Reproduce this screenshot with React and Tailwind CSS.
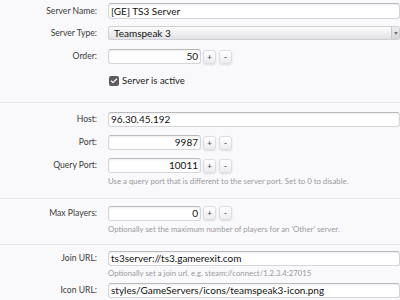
import { Check } from 'lucide-react'

const font = { fontFamily: 'Lato, "Liberation Sans", sans-serif' }

function Label({ children }) {
  return (
    <div className="w-[98px] shrink-0 pr-[1px] text-right text-[8.6px] text-[#3a3a3a]">{children}</div>
  )
}

function TextInput({ value, className = '' }) {
  return (
    <div
      className={`flex h-[15px] items-center whitespace-nowrap rounded-[3px] border border-[#d5d5da] border-t-[#b9b9be] bg-white px-[2px] text-[10px] text-[#111] shadow-[inset_0_1px_2px_rgba(0,0,0,0.08)] ${className}`}
    >
      {value}
    </div>
  )
}

function Spin() {
  return (
    <div className="ml-[2px] flex gap-[3px]">
      {['+', '-'].map((s) => (
        <div
          key={s}
          className="flex h-[14px] w-[13px] items-center justify-center rounded-[3px] border border-[#dcdce2] bg-gradient-to-b from-white to-[#ececf1] text-[8px] font-bold text-[#555] shadow-[0_1px_2px_rgba(0,0,0,0.12)]"
        >
          {s}
        </div>
      ))}
    </div>
  )
}

function Row({ label, children, className = '' }) {
  return (
    <div className={`flex items-center gap-[10px] ${className}`}>
      <Label>{label}</Label>
      {children}
    </div>
  )
}

function Hint({ children, className = '' }) {
  return <div className={`pl-[108px] text-[7.8px] text-[#9a9aa0] whitespace-nowrap ${className}`}>{children}</div>
}

export default function App() {
  return (
    <div className="h-[300px] w-[400px] overflow-hidden bg-[#f9f9fb]" style={font}>
      {/* General */}
      <div className="flex flex-col pt-[3px] pb-[14px]">
        <Row label="Server Name:">
          <TextInput value="[GE] TS3 Server" className="h-[16px] w-[300px]" />
        </Row>
        <Row label="Server Type:" className="mt-[7px]">
          <div className="flex h-[14px] w-[292px] shrink-0 items-center justify-between rounded-[2px] border border-[#cfcfd4] bg-gradient-to-b from-[#fdfdfd] to-[#e2e2e6] pl-[5px] text-[10px] text-[#111]">
            <span className="whitespace-nowrap">Teamspeak 3</span>
            <div className="flex h-full w-[8px] items-center justify-center border-l border-[#c9c9ce] bg-gradient-to-b from-[#eee] to-[#d4d4d8]">
              <div className="h-0 w-0 border-x-[2px] border-t-[3px] border-x-transparent border-t-[#777]" />
            </div>
          </div>
        </Row>
        <Row label="Order:" className="mt-[9px]">
          <div className="flex items-center">
            <TextInput value="50" className="w-[93px] justify-end" />
            <Spin />
          </div>
        </Row>
        <div className="mt-[10px] flex items-center gap-[3px] pl-[109px] text-[9.5px] text-[#222]">
          <div className="flex h-[10px] w-[10px] items-center justify-center rounded-[2px] bg-[#5b5b60]">
            <Check className="h-[8px] w-[8px] text-white" strokeWidth={3.5} />
          </div>
          <span>Server is active</span>
        </div>
      </div>

      {/* Connection */}
      <div className="flex flex-col border-t border-[#e4e4e9] pt-[9px] pb-[10px]">
        <Row label="Host:">
          <TextInput value="96.30.45.192" className="w-[300px]" />
        </Row>
        <Row label="Port:" className="mt-[8px]">
          <div className="flex items-center">
            <TextInput value="9987" className="w-[93px] justify-end" />
            <Spin />
          </div>
        </Row>
        <Row label="Query Port:" className="mt-[8px]">
          <div className="flex items-center">
            <TextInput value="10011" className="w-[93px] justify-end" />
            <Spin />
          </div>
        </Row>
        <Hint className="mt-[3px]">
          Use a query port that is different to the server port. Set to 0 to disable.
        </Hint>
      </div>

      {/* Players */}
      <div className="flex flex-col border-t border-[#e4e4e9] pt-[7px] pb-[8px]">
        <Row label="Max Players:">
          <div className="flex items-center">
            <TextInput value="0" className="w-[93px] justify-end" />
            <Spin />
          </div>
        </Row>
        <Hint className="mt-[3px]">
          Optionally set the maximum number of players for an 'Other' server.
        </Hint>
      </div>

      {/* URLs */}
      <div className="flex flex-col border-t border-[#e4e4e9] pt-[6px]">
        <Row label="Join URL:">
          <TextInput value="ts3server://ts3.gamerexit.com" className="w-[300px]" />
        </Row>
        <Hint className="mt-[2px]">Optionally set a join url. e.g. steam://connect/1.2.3.4:27015</Hint>
        <Row label="Icon URL:" className="mt-[4px]">
          <TextInput value="styles/GameServers/icons/teamspeak3-icon.png" className="w-[300px]" />
        </Row>
      </div>
    </div>
  )
}
